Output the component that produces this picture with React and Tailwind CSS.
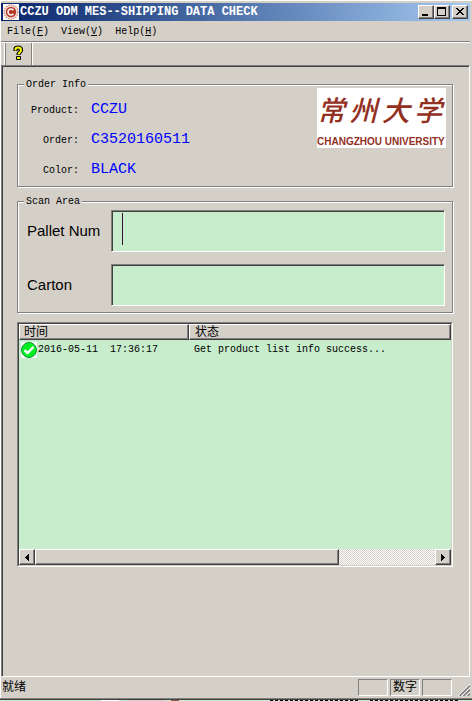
const mono = "font-['Liberation_Mono','Noto_Sans_CJK_SC',monospace]";
const sans = "font-['Liberation_Sans','Noto_Sans_CJK_SC',sans-serif]";
const raised =
  "border border-t-white border-l-white border-r-[#404040] border-b-[#404040] bg-[#d4d0c8] shadow-[inset_-1px_-1px_0_#808080]";
const sunken =
  "border border-t-[#808080] border-l-[#808080] border-r-white border-b-white shadow-[inset_1px_1px_0_#404040]";
const etched =
  "border border-[#808080] shadow-[1px_1px_0_#fff,inset_1px_1px_0_#fff]";

function AppIcon() {
  return (
    <svg className="size-4 shrink-0" viewBox="0 0 16 16" aria-hidden="true">
      <rect width="16" height="16" fill="#fff" />
      <circle cx="8" cy="8" r="7" fill="#f3dcd6" stroke="#c98374" strokeWidth="1.2" strokeDasharray="1.5 1" />
      <circle cx="8" cy="8" r="5.2" fill="#b23a26" />
      <path d="M10.4 6.2A3 3 0 1 0 10.4 9.8" fill="none" stroke="#fff" strokeWidth="1.5" />
    </svg>
  );
}

function WindowButton({ label, children }) {
  return (
    <button type="button" aria-label={label} className={`h-[14px] w-4 ${raised}`}>
      <svg className="block h-3 w-[14px]" viewBox="0 0 14 12" shapeRendering="crispEdges">
        {children}
      </svg>
    </button>
  );
}

function TitleBar() {
  return (
    <header className="flex h-[18px] items-center bg-linear-to-r from-[#0a246a] to-[#a6caf0] px-0.5">
      <AppIcon />
      <h1 className={`flex-1 pl-px text-xs leading-4 font-bold whitespace-nowrap text-white ${mono}`}>
        CCZU ODM MES--SHIPPING DATA CHECK
      </h1>
      <WindowButton label="Minimize">
        <rect x="3" y="8" width="6" height="2" />
      </WindowButton>
      <WindowButton label="Maximize">
        <path d="M2 1h9v9H2zM3 3v6h7V3z" fillRule="evenodd" />
      </WindowButton>
      <div className="w-0.5" />
      <WindowButton label="Close">
        <path d="M3 2h2v1h1v1h2V3h1V2h2v1h-1v1H9v1H8v1h1v1h1v1h1v1H9V8H8V7H6v1H5v1H3V8h1V7h1V6h1V5H5V4H4V3H3z" />
      </WindowButton>
    </header>
  );
}

function MenuBar() {
  const items = [
    ["File", "F"],
    ["View", "V"],
    ["Help", "H"],
  ];
  return (
    <nav className="flex h-5 items-end gap-3 pl-1.5">
      {items.map(([name, key]) => (
        <button key={name} type="button" className={`text-[10px] leading-[18px] ${mono}`}>
          {name}(<span className="underline">{key}</span>)
        </button>
      ))}
    </nav>
  );
}

function ToolBar() {
  return (
    <div className="border-t border-[#808080]">
      <div className="flex h-[23px] border-t border-white pl-[3px]">
        <button
          type="button"
          aria-label="About"
          className="flex w-7 justify-center border-r border-l border-r-[#808080] border-l-white pt-0.5 shadow-[1px_0_0_#fff,inset_1px_0_0_#808080]"
        >
          <svg className="h-4 w-3" viewBox="0 0 12 16">
            <path d="M3.5 6V4.5Q3.5 2.5 6.2 2.5T9 5Q9 6.5 7.8 7.3T6.5 9.5V10" fill="none" stroke="#000" strokeWidth="4.2" />
            <rect x="4" y="11" width="5" height="4" rx="1" />
            <path d="M3.5 5.5V4.5Q3.5 2.5 6.2 2.5T9 5Q9 6.5 7.8 7.3T6.5 9.5" fill="none" stroke="#ff0" strokeWidth="2" />
            <rect x="5" y="12" width="3" height="2" fill="#ff0" />
          </svg>
        </button>
      </div>
    </div>
  );
}

function UniversityLogo() {
  return (
    <div className="h-[60px] w-[129px] shrink-0 overflow-hidden bg-white text-[#93301f]">
      <div className={`flex h-12 items-center justify-between pr-1 text-[28px] leading-[48px] font-medium italic ${sans}`}>
        <span>常</span>
        <span>州</span>
        <span>大</span>
        <span>学</span>
      </div>
      <div className={`text-[10px] leading-3 font-bold whitespace-nowrap ${sans}`}>CHANGZHOU UNIVERSITY</div>
    </div>
  );
}

function OrderInfo() {
  const rows = [
    ["Product:", "CCZU"],
    ["Order:", "C3520160511"],
    ["Color:", "BLACK"],
  ];
  return (
    <fieldset className={`min-w-0 pb-px ${etched} ${mono}`}>
      <legend className="ml-1.5 h-2 bg-[#d4d0c8] px-0.5 text-[10px] leading-[10px]">Order Info</legend>
      <div className="flex items-start justify-between pr-1.5">
        <dl className="pt-[7px]">
          {rows.map(([name, value]) => (
            <div key={name} className="flex h-[30px] items-center gap-3">
              <dt className="w-[61px] text-right text-[10px]">{name}</dt>
              <dd className="text-[15px] text-[#0000ff]">{value}</dd>
            </div>
          ))}
        </dl>
        <UniversityLogo />
      </div>
    </fieldset>
  );
}

function ScanField({ id, label, caret }) {
  return (
    <div className="flex items-center pr-[7px]">
      <label htmlFor={id} className={`w-[93px] shrink-0 pl-[9px] text-[15px] whitespace-nowrap ${sans}`}>
        {label}
      </label>
      <div className="relative flex-1">
        <input
          id={id}
          type="text"
          className={`block h-[42px] w-full bg-[#c8edcc] px-3 text-base outline-none ${sunken} ${sans}`}
        />
        {caret && <span className="absolute top-[3px] left-[11px] h-8 w-px bg-[#370f32]" />}
      </div>
    </div>
  );
}

function ScanArea() {
  return (
    <fieldset className={`mt-2.5 min-w-0 pb-1.5 ${etched}`}>
      <legend className={`ml-1.5 h-2 bg-[#d4d0c8] px-0.5 text-[10px] leading-[10px] ${mono}`}>Scan Area</legend>
      <div className="flex flex-col gap-3 pt-[5px]">
        <ScanField id="pallet" label="Pallet Num" caret />
        <ScanField id="carton" label="Carton" />
      </div>
    </fieldset>
  );
}

function SuccessIcon() {
  return (
    <svg className="size-4 shrink-0" viewBox="0 0 16 16" role="img" aria-label="Success">
      <rect width="16" height="16" fill="#fff" />
      <circle cx="8" cy="8" r="7.5" fill="#00f020" stroke="#16923a" />
      <path d="M3.5 8.2L6.5 11L12.5 4.8" fill="none" stroke="#fff" strokeWidth="2.4" />
    </svg>
  );
}

function ScrollBar() {
  return (
    <div className="flex h-4 bg-[repeating-conic-gradient(#fff_0_25%,#d4d0c8_0_50%)] bg-size-[2px_2px]">
      <button type="button" aria-label="Scroll left" className={`flex w-4 items-center justify-center ${raised}`}>
        <svg className="h-[7px] w-1" viewBox="0 0 4 7" shapeRendering="crispEdges">
          <path d="M4 0v7L0 3.5z" />
        </svg>
      </button>
      <div className="flex flex-1">
        <div className={`w-[76%] ${raised}`} />
      </div>
      <button type="button" aria-label="Scroll right" className={`flex w-4 items-center justify-center ${raised}`}>
        <svg className="h-[7px] w-1" viewBox="0 0 4 7" shapeRendering="crispEdges">
          <path d="M0 0v7L4 3.5z" />
        </svg>
      </button>
    </div>
  );
}

function LogList() {
  return (
    <div className="mt-[9px] border border-t-[#808080] border-r-white border-b-white border-l-[#808080]">
      <div className="border border-t-[#404040] border-r-[#d4d0c8] border-b-[#d4d0c8] border-l-[#404040] bg-[#c8edcc]">
        <div className="h-[225px]">
          <table className="w-full table-fixed border-separate border-spacing-0 text-left">
            <thead>
              <tr className={`text-xs leading-[14px] ${sans}`}>
                <th className={`h-4 w-[170px] py-0 pl-1 font-normal ${raised}`}>时间</th>
                <th className={`h-4 py-0 pl-[5px] font-normal ${raised}`}>状态</th>
              </tr>
            </thead>
            <tbody>
              <tr className={`text-[10px] leading-[18px] whitespace-pre ${mono}`}>
                <td className="pt-px pl-0.5">
                  <div className="flex items-center gap-px">
                    <SuccessIcon />
                    2016-05-11  17:36:17
                  </div>
                </td>
                <td className="pt-px pl-[5px]">Get product list info success...</td>
              </tr>
            </tbody>
          </table>
        </div>
        <ScrollBar />
      </div>
    </div>
  );
}

function StatusBar() {
  const pane = "h-[17px] w-[30px] border border-t-[#808080] border-l-[#808080] border-r-white border-b-white";
  return (
    <footer className={`flex h-[21px] items-center gap-0.5 pl-px text-xs leading-[15px] ${sans}`}>
      <span className="flex-1">就绪</span>
      <span className={pane} />
      <span className={`text-center whitespace-nowrap ${pane}`}>数字</span>
      <span className={pane} />
      <svg className="mb-0.5 ml-1 size-3 self-end" viewBox="0 0 12 12" aria-hidden="true">
        <path d="M0 12L12 0M4 12L12 4M8 12L12 8" stroke="#fff" strokeWidth="1" />
        <path d="M1.5 12L12 1.5M5.5 12L12 5.5M9.5 12L12 9.5" stroke="#808080" strokeWidth="1.6" />
      </svg>
    </footer>
  );
}

function BackgroundEdge() {
  return (
    <div className="flex h-px bg-[#c8edcc]">
      <span className="ml-[101px] w-[18px] bg-white" />
      <span className="ml-2 w-[38px] bg-[#d4d0c8]" />
      <span className="ml-1.5 w-2 bg-[#93604a]" />
      <span className="ml-[91px] w-[88px] border-t border-dashed border-black" />
      <span className="ml-3 w-[88px] border-t border-dashed border-black" />
    </div>
  );
}

export default function App() {
  return (
    <div className="flex min-h-screen flex-col overflow-hidden bg-[#d4d0c8] text-black">
      <div className="flex flex-1 flex-col border-t border-l border-white pt-0.5 pr-0.5">
        <TitleBar />
        <MenuBar />
        <ToolBar />
        <main className="flex flex-1 flex-col border border-t-[#808080] border-r-white border-b-white border-l-[#808080]">
          <div className="flex-1 border-t border-l border-[#404040] pt-[13px] pr-4 pl-[14px]">
            <OrderInfo />
            <ScanArea />
            <LogList />
          </div>
        </main>
        <StatusBar />
      </div>
      <div className="h-0.5 border-t border-[#808080] bg-[#404040]" />
      <BackgroundEdge />
    </div>
  );
}
